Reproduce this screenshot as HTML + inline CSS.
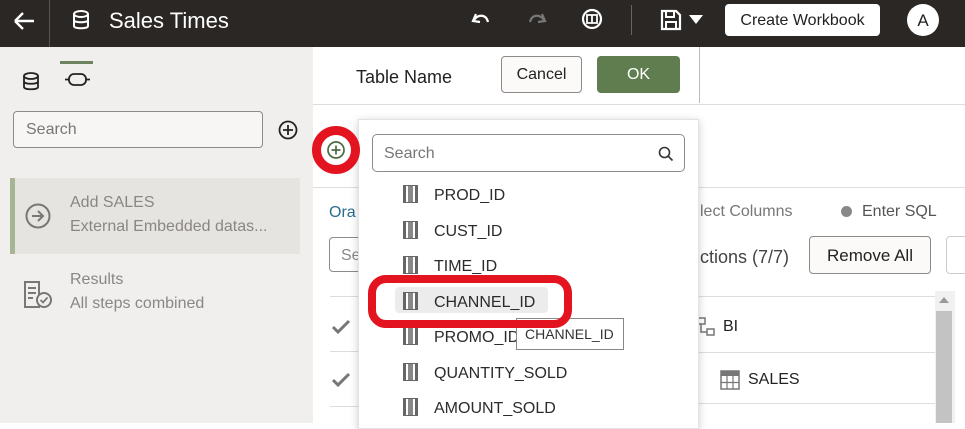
<!DOCTYPE html>
<html><head><style>
*{box-sizing:border-box;margin:0;padding:0}
body{width:965px;height:423px;overflow:hidden;position:relative;font-family:"Liberation Sans",sans-serif;background:#fff}
.a{position:absolute}
.t{position:absolute;white-space:nowrap}
.item{position:absolute;left:403px;font-size:16px;color:#2b2b2b}
.ic{display:inline-block;width:15px;height:18px;vertical-align:-3px;margin-right:16px;background:linear-gradient(90deg,#666 0 2px,#fff 2px 4px,#888 4px 9px,#fff 9px 11px,#666 11px 13px,#fff 13px);border:1px solid #666}
</style></head><body>
<!-- top bar -->
<div class="a" style="left:0;top:0;width:965px;height:47px;background:#2b2724"></div>
<svg class="a" style="left:12px;top:10px" width="26" height="22"><path d="M3 11H22M3 11L11 3M3 11L11 19" stroke="#fff" stroke-width="2.4" fill="none"/></svg>
<div class="a" style="left:49px;top:0;width:1px;height:47px;background:#555"></div>
<svg class="a" style="left:71px;top:9px" width="20" height="22"><ellipse cx="10" cy="5" rx="7" ry="3" stroke="#fff" stroke-width="2" fill="none"/><path d="M3 5V17C3 20 17 20 17 17V5M3 11C3 14 17 14 17 11" stroke="#fff" stroke-width="2" fill="none"/></svg>
<div class="t" style="left:109px;top:8px;font-size:22px;color:#fff">Sales Times</div>
<svg class="a" style="left:470px;top:10px" width="22" height="20"><path d="M6 4L3 11L10 12M4 10C8 4 16 4 18 12" stroke="#fff" stroke-width="2.2" fill="none"/></svg>
<svg class="a" style="left:526px;top:10px" width="22" height="20"><path d="M16 4L19 11L12 12M18 10C14 4 6 4 4 12" stroke="#777" stroke-width="2.2" fill="none"/></svg>
<svg class="a" style="left:579px;top:7px" width="26" height="26"><circle cx="13" cy="12" r="9" stroke="#fff" stroke-width="2.2" fill="none"/><path d="M8 8H18V16H8ZM13 8V16" stroke="#fff" stroke-width="1.8" fill="none"/></svg>
<div class="a" style="left:631px;top:5px;width:1px;height:30px;background:#666"></div>
<svg class="a" style="left:660px;top:9px" width="22" height="22"><path d="M2 2H16L20 6V20H2Z" stroke="#fff" stroke-width="2.2" fill="none"/><path d="M6 2V8H14V2M6 20V13H16V20" stroke="#fff" stroke-width="2" fill="none"/></svg>
<svg class="a" style="left:689px;top:15px" width="14" height="10"><path d="M0 0H14L7 9Z" fill="#fff"/></svg>
<div class="a" style="left:725px;top:4px;width:155px;height:32px;background:#fff;border-radius:4px;font-size:16px;color:#222;text-align:center;line-height:33px">Create Workbook</div>
<div class="a" style="left:907px;top:4px;width:32px;height:32px;background:#fff;border-radius:50%;font-size:17px;text-align:center;line-height:33px;color:#222">A</div>
<!-- left panel -->
<div class="a" style="left:0;top:47px;width:313px;height:376px;background:#f1efed"></div>
<svg class="a" style="left:21px;top:71px" width="20" height="20"><ellipse cx="10" cy="5" rx="7" ry="3" stroke="#222" stroke-width="1.8" fill="none"/><path d="M3 5V16C3 19 17 19 17 16V5M3 10.5C3 13.5 17 13.5 17 10.5" stroke="#222" stroke-width="1.8" fill="none"/></svg>
<div class="a" style="left:60px;top:61px;width:33px;height:3px;background:#6e8460"></div>
<svg class="a" style="left:65px;top:72px" width="26" height="16"><rect x="4" y="2" width="17" height="11" rx="5" stroke="#222" stroke-width="1.8" fill="none"/><path d="M0 7.5H4M21 7.5H25" stroke="#222" stroke-width="1.8"/></svg>
<div class="a" style="left:13px;top:111px;width:250px;height:37px;border:1px solid #8d8a87;border-radius:4px;background:#f7f6f5"></div>
<div class="t" style="left:26px;top:121px;font-size:16px;color:#777">Search</div>
<svg class="a" style="left:278px;top:120px" width="20" height="20"><circle cx="10" cy="10" r="8.5" stroke="#222" stroke-width="1.8" fill="none"/><path d="M10 5V15M5 10H15" stroke="#222" stroke-width="1.8"/></svg>
<div class="a" style="left:10px;top:178px;width:290px;height:76px;background:#e6e4e1;border-left:5px solid #a5b596"></div>
<svg class="a" style="left:24px;top:202px" width="28" height="28"><circle cx="14" cy="14" r="11.5" stroke="#7a7673" stroke-width="2" fill="none"/><path d="M8 14H19M14 9L19 14L14 19" stroke="#7a7673" stroke-width="2" fill="none"/></svg>
<div class="t" style="left:70px;top:194px;font-size:16px;color:#8a8683">Add SALES</div>
<div class="t" style="left:70px;top:218px;font-size:16px;color:#8a8683">External Embedded datas...</div>
<svg class="a" style="left:23px;top:280px" width="32" height="30"><path d="M2 2H16V27H2Z" stroke="#7a7673" stroke-width="2" fill="none"/><path d="M5 8H13M5 13H13M5 18H10" stroke="#7a7673" stroke-width="2"/><circle cx="21" cy="20" r="7" fill="#f1efed" stroke="#7a7673" stroke-width="2"/><path d="M17.5 20L20 22.5L24.5 17.5" stroke="#7a7673" stroke-width="1.8" fill="none"/></svg>
<div class="t" style="left:70px;top:271px;font-size:16px;color:#8a8683">Results</div>
<div class="t" style="left:70px;top:295px;font-size:16px;color:#8a8683">All steps combined</div>
<!-- right -->
<div class="t" style="left:356px;top:67px;font-size:18px;color:#222">Table Name</div>
<div class="a" style="left:501px;top:56px;width:81px;height:37px;border:1px solid #8d8a87;border-radius:4px;background:#fbfaf9;font-size:16px;text-align:center;line-height:36px;color:#222">Cancel</div>
<div class="a" style="left:597px;top:56px;width:83px;height:37px;border-radius:4px;background:#5f7d4f;font-size:16px;text-align:center;line-height:38px;color:#fff">OK</div>
<div class="a" style="left:699px;top:47px;width:1px;height:56px;background:#bbb"></div>
<div class="a" style="left:313px;top:104px;width:652px;height:1px;background:#ddd"></div>
<div class="a" style="left:313px;top:187px;width:652px;height:1px;background:#ddd"></div>
<div class="t" style="left:329px;top:204px;font-size:16px;color:#2a6c8e">Ora</div>
<div class="a" style="left:329px;top:237px;width:60px;height:35px;border:1px solid #8d8a87;border-radius:4px"></div>
<div class="t" style="left:341px;top:247px;font-size:16px;color:#888">Se</div>
<div class="a" style="left:330px;top:296px;width:30px;height:1px;background:#ddd"></div>
<div class="a" style="left:330px;top:351px;width:30px;height:1px;background:#ddd"></div>
<div class="a" style="left:330px;top:406px;width:30px;height:1px;background:#ddd"></div>
<svg class="a" style="left:331px;top:319px" width="20" height="16"><path d="M2 8L7 13L18 2" stroke="#777" stroke-width="3" fill="none"/></svg>
<svg class="a" style="left:331px;top:372px" width="20" height="16"><path d="M2 8L7 13L18 2" stroke="#777" stroke-width="3" fill="none"/></svg>
<div class="t" style="left:700px;top:203px;font-size:16px;color:#777">lect Columns</div>
<div class="a" style="left:841px;top:206px;width:11px;height:11px;border-radius:50%;background:#888"></div>
<div class="t" style="left:862px;top:203px;font-size:16px;color:#555">Enter SQL</div>
<div class="t" style="left:700px;top:247px;font-size:18px;color:#444">ctions (7/7)</div>
<div class="a" style="left:809px;top:236px;width:122px;height:38px;border:1px solid #8d8a87;border-radius:4px;background:#fbfaf9;font-size:17px;text-align:center;line-height:37px;color:#222">Remove All</div>
<div class="a" style="left:946px;top:236px;width:30px;height:38px;border:1px solid #ccc;border-radius:4px"></div>
<div class="a" style="left:690px;top:296px;width:245px;height:1px;background:#ddd"></div>
<div class="a" style="left:690px;top:352px;width:245px;height:1px;background:#ddd"></div>
<div class="a" style="left:690px;top:403px;width:245px;height:1px;background:#ddd"></div>
<div class="a" style="left:935px;top:291px;width:20px;height:132px;background:#f1f1f1"></div>
<div class="a" style="left:936px;top:311px;width:16px;height:112px;background:#c3c3c3"></div>
<svg class="a" style="left:939px;top:296px" width="10" height="8"><path d="M0 7L5 1L10 7Z" fill="#999"/></svg>
<svg class="a" style="left:697px;top:317px" width="20" height="20"><path d="M1 1H8V7H1ZM10 12H17V18H10ZM4 7V15H10" stroke="#777" stroke-width="1.5" fill="none"/></svg>
<div class="t" style="left:723px;top:318px;font-size:16px;color:#222">BI</div>
<svg class="a" style="left:720px;top:370px" width="20" height="20"><rect x="1" y="1" width="18" height="18" fill="#fff" stroke="#777" stroke-width="1.5"/><rect x="1" y="1" width="18" height="5" fill="#777"/><path d="M7 6V19M13 6V19M1 12.5H19" stroke="#777" stroke-width="1.2"/></svg>
<div class="t" style="left:748px;top:371px;font-size:16px;color:#222">SALES</div>
<!-- dropdown -->
<div class="a" style="left:358px;top:119px;width:341px;height:310px;background:#fff;box-shadow:0 2px 8px rgba(0,0,0,.2);border:1px solid #e3e3e3"></div>
<div class="a" style="left:372px;top:134px;width:313px;height:38px;border:1px solid #8d8a87;border-radius:5px"></div>
<div class="t" style="left:384px;top:145px;font-size:16px;color:#777">Search</div>
<svg class="a" style="left:658px;top:146px" width="16" height="16"><circle cx="6.5" cy="6.5" r="5" stroke="#333" stroke-width="1.6" fill="none"/><path d="M10 10L14.5 14.5" stroke="#333" stroke-width="1.6"/></svg>
<div class="a" style="left:395px;top:287px;width:153px;height:26px;background:#ececec;border-radius:4px"></div>
<div class="item" style="top:185px"><span class="ic"></span>PROD_ID</div>
<div class="item" style="top:221px"><span class="ic"></span>CUST_ID</div>
<div class="item" style="top:256px"><span class="ic"></span>TIME_ID</div>
<div class="item" style="top:292px"><span class="ic"></span>CHANNEL_ID</div>
<div class="item" style="top:327px"><span class="ic"></span>PROMO_ID</div>
<div class="item" style="top:363px"><span class="ic"></span>QUANTITY_SOLD</div>
<div class="item" style="top:398px"><span class="ic"></span>AMOUNT_SOLD</div>
<div class="a" style="left:516px;top:318px;width:108px;height:32px;border:1px solid #888;background:#fff;font-size:14px;color:#333;line-height:31px;padding-left:8px">CHANNEL_ID</div>
<div class="a" style="left:368px;top:275px;width:204px;height:53px;border:8px solid #e3141f;border-radius:18px"></div>
<div class="a" style="left:312px;top:126px;width:48px;height:48px;border:9px solid #e3141f;border-radius:50%;background:#fff"></div>
<svg class="a" style="left:326px;top:140px" width="20" height="20"><circle cx="10" cy="10" r="8" stroke="#4d6b3c" stroke-width="1.7" fill="none"/><path d="M10 5.5V14.5M5.5 10H14.5" stroke="#4d6b3c" stroke-width="1.7"/></svg>
</body></html>
